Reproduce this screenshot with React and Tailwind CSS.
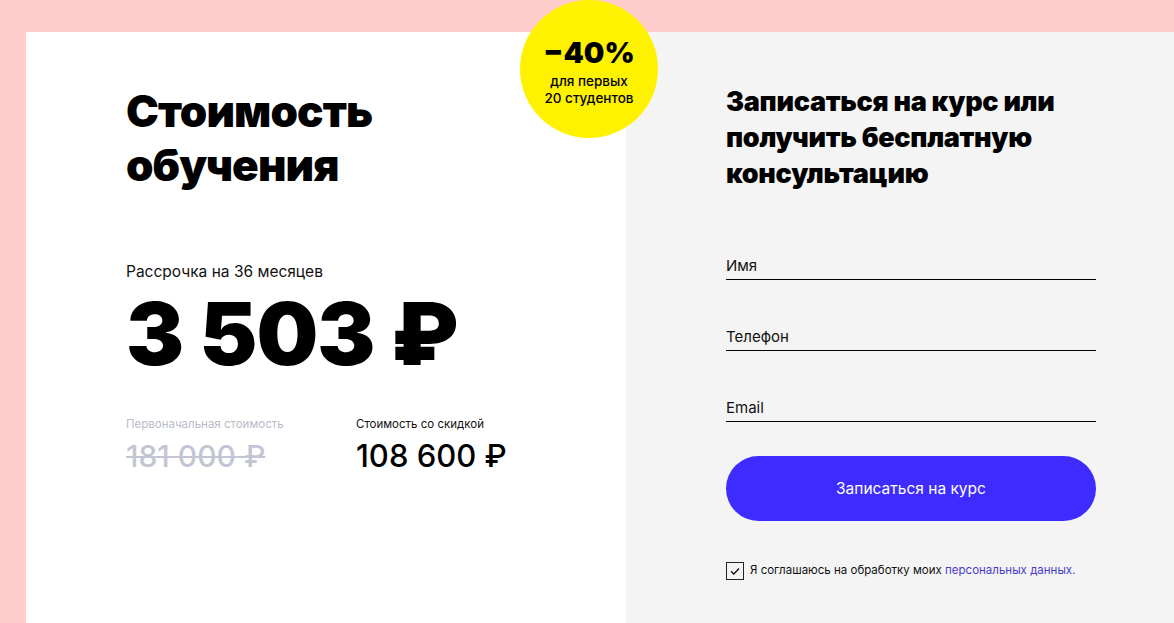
import React from "react";

export default function App() {
  const font = { fontFamily: "Inter, 'Liberation Sans', Arial, sans-serif" };
  return (
    <div className="relative min-h-[623px] h-[623px] bg-[#ffcccc] pt-[32px] pl-[26px] overflow-hidden" style={font}>
      <div className="flex h-full">
        <div className="w-[600px] bg-white pl-[100px] pt-[52px]">
          <h1 className="text-[44px] leading-[54px] font-black text-black tracking-[-0.9px]">
            Стоимость<br />обучения
          </h1>
          <div className="mt-[70px] text-[15.5px] leading-[20px] text-[#111]">Рассрочка на 36 месяцев</div>
          <div className="mt-[12px] text-[87px] leading-[80px] font-black text-black tracking-[-1px]">3 503 ₽</div>
          <div className="mt-[42px] flex">
            <div className="w-[230px]">
              <div className="text-[11.5px] leading-[16px] text-[#b8bcc8]">Первоначальная стоимость</div>
              <div className="mt-[6px] text-[30px] leading-[36px] font-medium text-[#c3c6d2] line-through decoration-2">181 000 ₽</div>
            </div>
            <div>
              <div className="text-[11.5px] leading-[16px] text-[#111]">Стоимость со скидкой</div>
              <div className="mt-[6px] text-[31px] leading-[36px] font-medium text-black">108 600 ₽</div>
            </div>
          </div>
        </div>
        <div className="flex-1 bg-[#f4f4f4] pl-[100px] pt-[52px]">
          <h2 className="w-[400px] text-[27px] leading-[36px] font-black text-black tracking-[-0.3px]">
            Записаться на курс или<br />получить бесплатную<br />консультацию
          </h2>
          <div className="mt-[65px] w-[370px] flex flex-col gap-[48px]">
            {["Имя", "Телефон", "Email"].map((l) => (
              <div key={l} className="border-b-[1.5px] border-black pb-[4px] text-[15px] leading-[18px] text-[#111]">
                {l}
              </div>
            ))}
          </div>
          <button className="mt-[34px] w-[370px] h-[65px] rounded-full bg-[#3d2bff] text-white text-[15.5px]">
            Записаться на курс
          </button>
          <div className="mt-[41px] flex items-center gap-[6px] text-[11.5px] text-[#111]">
            <div className="w-[18px] h-[18px] border border-[#222] flex items-center justify-center">
              <svg width="12" height="12" viewBox="0 0 12 12" fill="none">
                <path d="M2 6.2 L4.8 9 L10 3.5" stroke="#111" strokeWidth="1.4" />
              </svg>
            </div>
            <span>
              Я соглашаюсь на обработку моих <span className="text-[#4a3ccf]">персональных данных.</span>
            </span>
          </div>
        </div>
      </div>
      <div className="absolute left-[520px] top-0 w-[138px] h-[138px] rounded-full bg-[#fff200] flex flex-col items-center pt-[37px] text-black">
        <div className="text-[29px] leading-[32px] font-black">−40%</div>
        <div className="mt-[4px] text-[13.5px] leading-[17px] font-medium text-center">для первых<br />20 студентов</div>
      </div>
    </div>
  );
}
